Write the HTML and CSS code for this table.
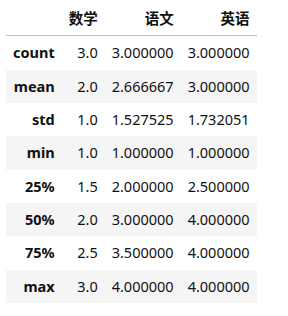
FILE: index.html
```html
<!DOCTYPE html>
<html>
<head>
<meta charset="utf-8">
<link rel="stylesheet" href="styles.css">
</head>
<body>
<table class="df">
  <thead>
    <tr><th></th><th>数学</th><th>语文</th><th>英语</th></tr>
  </thead>
  <tbody>
    <tr><th>count</th><td>3.0</td><td>3.000000</td><td>3.000000</td></tr>
    <tr><th>mean</th><td>2.0</td><td>2.666667</td><td>3.000000</td></tr>
    <tr><th>std</th><td>1.0</td><td>1.527525</td><td>1.732051</td></tr>
    <tr><th>min</th><td>1.0</td><td>1.000000</td><td>1.000000</td></tr>
    <tr><th>25%</th><td>1.5</td><td>2.000000</td><td>2.500000</td></tr>
    <tr><th>50%</th><td>2.0</td><td>3.000000</td><td>4.000000</td></tr>
    <tr><th>75%</th><td>2.5</td><td>3.500000</td><td>4.000000</td></tr>
    <tr><th>max</th><td>3.0</td><td>4.000000</td><td>4.000000</td></tr>
  </tbody>
</table>
</body>
</html>
```
FILE: styles.css
```css
html, body {
  margin: 0;
  padding: 0;
  background: #fff;
}
body {
  padding: 2px 0 0 6px;
  font-family: "Noto Sans", "Noto Sans CJK SC", sans-serif;
  font-size: 14.5px;
  color: #111;
}
.df {
  border-collapse: collapse;
  border-spacing: 0;
}
.df th, .df td {
  padding: 7px;
  text-align: right;
  line-height: 19.33px;
  white-space: nowrap;
}
.df th {
  font-weight: bold;
}
.df thead th {
  border-bottom: 1px solid #bdbdbd;
}
.df tbody tr:nth-child(even) {
  background: #f5f5f5;
}
```
